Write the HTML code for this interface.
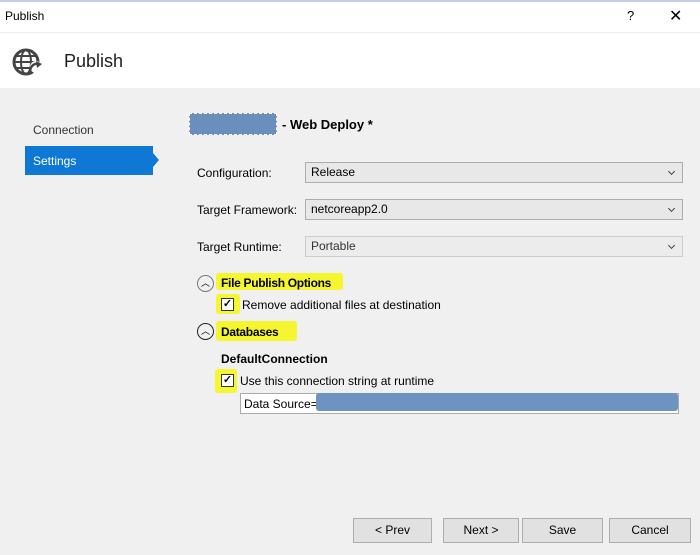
<!DOCTYPE html><html><head><style>
body{margin:0;width:700px;height:555px;background:#f0f0f0;font-family:"Liberation Sans",sans-serif;font-size:12px;color:#000;position:relative;overflow:hidden}
.a{position:absolute}
.sel{position:absolute;left:305px;width:376px;height:19px;border:1px solid #acacac;background:#e8e8e8;line-height:19px;text-indent:5px;font-size:12px}
.sel:after{content:"";position:absolute;right:8px;top:6px;width:4px;height:4px;border-right:1px solid #444;border-bottom:1px solid #444;transform:rotate(45deg)}
.btn{position:absolute;top:518px;height:23px;border:1px solid #adadad;background:#e1e1e1;text-align:center;line-height:23px;font-size:12px}
.hl{position:absolute;background:#f5f530;border-radius:3px}
.cb{position:absolute;width:11px;height:11px;border:1px solid #333;background:#fff;font-size:11px;line-height:11px;text-align:center;font-weight:bold}
.circ{position:absolute;width:15px;height:15px;border:1px solid #777;border-radius:50%;background:#f0f0f0;font-size:9px;text-align:center;line-height:14px}
</style></head><body>
<div class="a" style="left:0;top:0;width:700px;height:2px;background:#c4cfe0"></div>
<div class="a" style="left:0;top:2px;width:700px;height:86px;background:#fff"></div>
<div class="a" style="left:0;top:32px;width:700px;height:1px;background:#ececec"></div>
<div class="a" style="left:5px;top:9px;font-size:12px">Publish</div>
<div class="a" style="left:627px;top:8px;font-size:13px">?</div>
<div class="a" style="left:669px;top:6px;font-size:16px">✕</div>
<svg class="a" style="left:11px;top:47px" width="34" height="30" viewBox="0 0 34 30">
<circle cx="15" cy="15" r="12" fill="none" stroke="#444" stroke-width="3"/>
<ellipse cx="15" cy="15" rx="5" ry="12" fill="none" stroke="#444" stroke-width="2"/>
<path d="M3 15h24M5 9h20M5 21h20" stroke="#444" stroke-width="2" fill="none"/>
<circle cx="25" cy="20" r="6" fill="#fff"/>
<path d="M20 27a7 7 0 0 1 8-10" stroke="#444" stroke-width="2.5" fill="none"/>
<path d="M25 14l6 3-5 4z" fill="#444"/>
</svg>
<div class="a" style="left:64px;top:51px;font-size:18px;color:#1e1e1e">Publish</div>
<div class="a" style="left:33px;top:123px;font-size:12px;color:#333">Connection</div>
<div class="a" style="left:25px;top:146px;width:128px;height:29px;background:#0e78d4"></div>
<div class="a" style="left:153px;top:153px;border-left:6px solid #0e78d4;border-top:7px solid transparent;border-bottom:7px solid transparent"></div>
<div class="a" style="left:33px;top:154px;color:#fff">Settings</div>
<div class="a" style="left:189px;top:113px;width:86px;height:20px;background:#6b8fbd;border:1px dashed #fff"></div>
<div class="a" style="left:282px;top:117px;font-weight:bold;font-size:13px">- Web Deploy *</div>
<div class="a" style="left:197px;top:166px">Configuration:</div>
<div class="sel" style="top:162px">Release</div>
<div class="a" style="left:197px;top:203px">Target Framework:</div>
<div class="sel" style="top:199px">netcoreapp2.0</div>
<div class="a" style="left:197px;top:240px">Target Runtime:</div>
<div class="sel" style="top:236px;color:#333;background:#ececec;border-color:#ccc">Portable</div>
<div class="hl" style="left:216px;top:273px;width:127px;height:17px"></div>
<div class="circ" style="left:197px;top:275px">︿</div>
<div class="a" style="left:221px;top:276px;font-weight:bold;letter-spacing:-0.3px">File Publish Options</div>
<div class="hl" style="left:216px;top:294px;width:24px;height:20px"></div>
<div class="cb" style="left:221px;top:298px">✓</div>
<div class="a" style="left:242px;top:298px">Remove additional files at destination</div>
<div class="hl" style="left:216px;top:321px;width:81px;height:20px"></div>
<div class="circ" style="left:197px;top:323px;border-color:#222">︿</div>
<div class="a" style="left:221px;top:325px;font-weight:bold;letter-spacing:-0.3px">Databases</div>
<div class="a" style="left:221px;top:352px;font-weight:bold">DefaultConnection</div>
<div class="hl" style="left:215px;top:369px;width:22px;height:24px"></div>
<div class="cb" style="left:221px;top:374px">✓</div>
<div class="a" style="left:240px;top:374px">Use this connection string at runtime</div>
<div class="a" style="left:240px;top:393px;width:437px;height:19px;background:#fff;border:1px solid #aaa"></div>
<div class="a" style="left:244px;top:397px">Data Source=</div>
<div class="a" style="left:316px;top:393px;width:362px;height:18px;background:#6f93c0;border-radius:3px"></div>
<div class="btn" style="left:353px;width:77px">&lt; Prev</div>
<div class="btn" style="left:443px;width:74px">Next &gt;</div>
<div class="btn" style="left:522px;width:79px">Save</div>
<div class="btn" style="left:609px;width:80px">Cancel</div>
</body></html>
